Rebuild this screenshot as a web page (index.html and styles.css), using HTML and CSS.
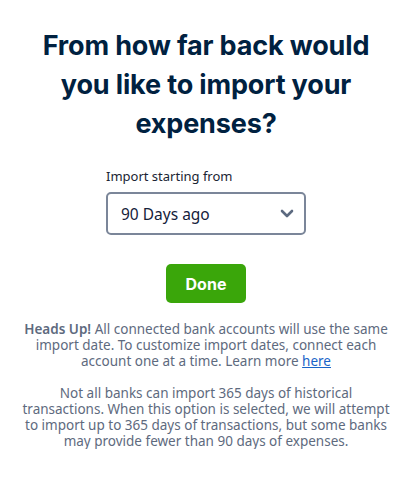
FILE: index.html
```html
<!DOCTYPE html>
<html lang="en">
<head>
    <meta charset="UTF-8">
    <meta name="viewport" content="width=device-width, initial-scale=1.0">
    <title>Import expenses</title>
    <link rel="stylesheet" href="styles.css">
</head>
<body>
    <div class="page">
        <h1 class="title">From how far back would you like to import your expenses?</h1>

        <div class="field">
            <label for="startDate" class="field-label">Import starting from</label>
            <div class="select-box">
                <span class="select-value">90 Days ago</span>
                <svg class="chevron" width="14" height="9" viewBox="0 0 14 9">
                    <path d="M2 2 L7 7 L12 2" fill="none" stroke="#5c6a80" stroke-width="2.6" stroke-linecap="round" stroke-linejoin="round"/>
                </svg>
            </div>
        </div>

        <button type="button" class="done-btn">Done</button>

        <p class="note"><strong>Heads Up!</strong> All connected bank accounts will use the same import date. To customize import dates, connect each account one at a time. Learn more <a href="#">here</a></p>

        <p class="note">Not all banks can import 365 days of historical transactions. When this option is selected, we will attempt to import up to 365 days of transactions, but some banks may provide fewer than 90 days of expenses.</p>
    </div>
</body>
</html>
```

FILE: styles.css
```css
body {
    margin: 0;
    background: #fff;
    font-family: "Noto Sans", Arial, sans-serif;
}
.page {
    display: flex;
    flex-direction: column;
    align-items: center;
    padding: 26px 20px 0;
}
.title {
    margin: 0;
    font-family: Inter, "Liberation Sans", sans-serif;
    font-size: 27px;
    font-weight: 700;
    line-height: 39px;
    color: #002140;
    text-align: center;
    letter-spacing: -0.15px;
}
.field {
    margin-top: 24px;
    width: 200px;
}
.field-label {
    display: block;
    font-size: 13px;
    color: #1a2433;
    margin-bottom: 7px;
}
.select-box {
    box-sizing: border-box;
    height: 43px;
    border: 2px solid #7b8699;
    border-radius: 5px;
    display: flex;
    align-items: center;
    justify-content: space-between;
    padding: 0 10px 0 13px;
}
.select-value {
    font-size: 15.5px;
    color: #14213a;
}
.done-btn {
    margin-top: 29px;
    width: 80px;
    height: 39px;
    border: none;
    border-radius: 5px;
    background-color: #3aa60a;
    color: #fff;
    font-family: Inter, "Liberation Sans", sans-serif;
    font-size: 16px;
    font-weight: 700;
    cursor: pointer;
}
.note {
    margin: 18px 0 0;
    font-size: 13.5px;
    line-height: 16px;
    color: #5e6a7e;
    text-align: center;
}
.note + .note {
    margin-top: 16px;
}
.note strong {
    font-weight: 600;
}
.note a {
    color: #1a64c8;
}
```
